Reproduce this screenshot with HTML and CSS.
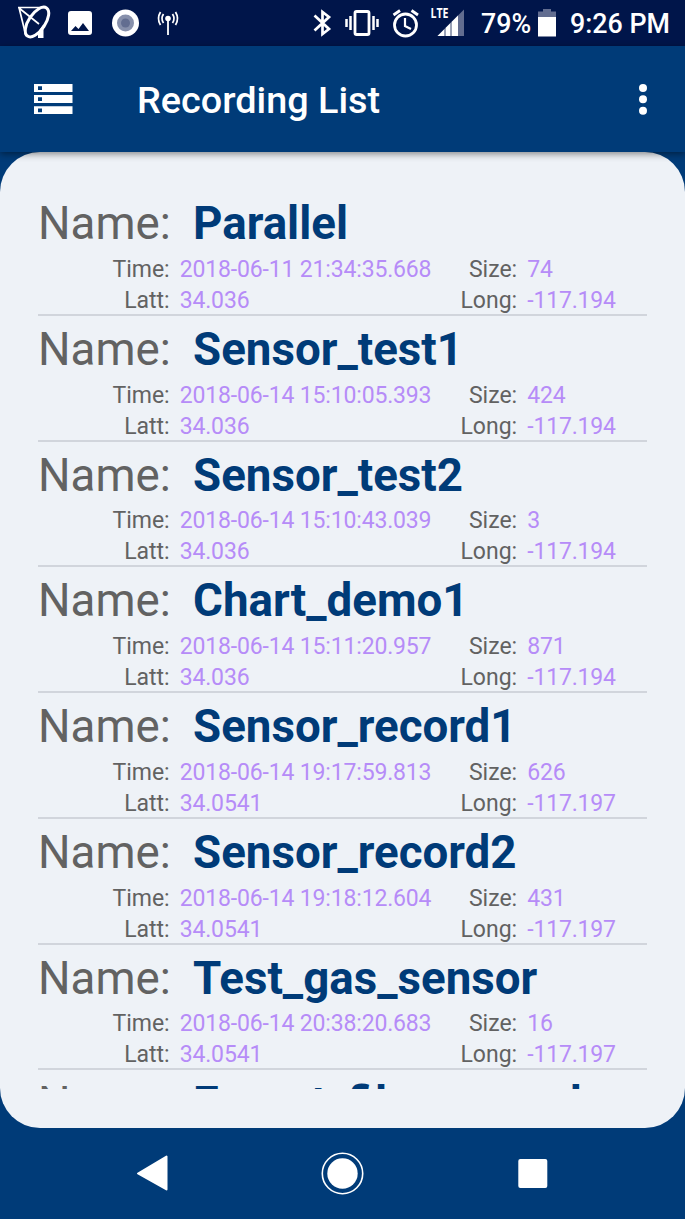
FILE: index.html
```
<!DOCTYPE html>
<html lang="en">
<head>
<meta charset="utf-8">
<title>Recording List</title>
<link rel="stylesheet" href="styles.css">
</head>
<body>
<div class="statusbar">
  <svg class="status-left" width="190" height="46" viewBox="0 0 190 46" fill="none" stroke="#fff">
    <path d="M18 7.500H46M19 7.500L26 36M19 8L39 24" stroke-width="1.700"/>
    <ellipse cx="37" cy="22" rx="8.300" ry="17" transform="rotate(34 37 22)" stroke-width="3"/>
    <path d="M38 32L43.500 24V38H38V36Z" fill="#fff" stroke="none"/>
    <path d="M71 11H89A3 3 0 0 1 92 14V32A3 3 0 0 1 89 35H71A3 3 0 0 1 68 32V14A3 3 0 0 1 71 11ZM71 31H89L83 23L78.500 29L75.500 26Z" fill="#fff" stroke="none" fill-rule="evenodd"/>
    <circle cx="125.500" cy="23" r="13.500" fill="#fff" stroke="none"/>
    <circle cx="125.500" cy="23" r="8.500" fill="#8790ab" stroke="none"/>
    <circle cx="125.500" cy="23" r="4.500" fill="#626d90" stroke="none"/>
    <path d="M168 19V35" stroke-width="1.800"/>
    <circle cx="168" cy="18.500" r="2.800" fill="#fff" stroke="none"/>
    <path d="M163.500 14Q160.500 18.500 163.500 23M172.500 14Q175.500 18.500 172.500 23M160.500 12Q156.500 18.500 160.500 25M175.500 12Q179.500 18.500 175.500 25" stroke-width="1.800"/>
  </svg>
  <svg class="status-right" width="170" height="46" viewBox="300 0 170 46" fill="none" stroke="#fff">
    <path d="M314.500 15.500L329 29L322.500 34V12L329 17L314.500 30.500" stroke-width="2.700"/>
    <rect x="355" y="11.500" width="14" height="23" rx="1.500" stroke-width="2.800"/>
    <path d="M346.500 19V27M350.500 16V30M373.500 16V30M377.500 19V27" stroke-width="2.500"/>
    <circle cx="405.500" cy="25" r="11" stroke-width="2.800"/>
    <path d="M405 18V26L411 29" stroke-width="2.200"/>
    <path d="M393.500 15L400 10.500M411.500 10.500L418 15" stroke-width="2.800"/>
    <path d="M464 9.500V36H437.500Z" fill="#626d90" stroke="none"/>
    <path d="M458 15.500V36H437.500Z" fill="#fff" stroke="none"/>
    <path d="M445 28V36M451 22V36" stroke="#00154a" stroke-width=".8"/>
    <text class="lte" x="430.500" y="18" textLength="18" lengthAdjust="spacingAndGlyphs">LTE</text>
  </svg>
  <span class="percent">79%</span>
  <svg class="battery" width="18" height="46" viewBox="0 0 18 46"><path d="M0 11.500H5V9H13V11.500H18V17H0Z" fill="#626d90"/><path d="M0 17H18V36.500H0Z" fill="#fff"/></svg>
  <span class="clock">9:26 PM</span>
</div>
<header class="appbar">
  <svg class="storage" width="39" height="30" viewBox="0 0 39 30"><path fill="#fff" fill-rule="evenodd" d="M0 0H38.500V8H0ZM0 11H38.500V19H0ZM0 22.300H38.500V30H0ZM4 2.200V6H8V2.200ZM4 13.200V17H8V13.200ZM4 24.500V28.300H8V24.500Z"/></svg>
  <h1 class="title">Recording List</h1>
  <svg class="more" width="10" height="32" viewBox="0 0 10 32" fill="#fff"><circle cx="5" cy="5" r="4"/><circle cx="5" cy="16.300" r="4"/><circle cx="5" cy="27.700" r="4"/></svg>
</header>
<main class="panel">
  <div class="list" id="list"></div>
</main>
<nav class="navbar">
  <svg width="685" height="91" viewBox="0 0 685 91" fill="#fff"><path d="M138 45.500L166.500 28.500V61.500Z" stroke="#fff" stroke-width="2" stroke-linejoin="round"/><circle cx="342.500" cy="45.500" r="15.200"/><circle cx="342.500" cy="45.500" r="20.200" fill="none" stroke="#fff" stroke-width="1.600"/><rect x="518.300" y="31" width="29" height="29" rx="2"/></svg>
</nav>
<script src="list.js"></script>
</body>
</html>
```
FILE: styles.css
```
body { margin: 0; width: 685px; height: 1219px; overflow: hidden; background: #003b78; color: #fff; font-family: Roboto, sans-serif; display: flex; flex-direction: column; }
svg { display: block; flex: none; }
.statusbar { height: 46px; flex: none; background: #00154a; display: flex; align-items: center; font-size: 26.800px; font-weight: 500; white-space: nowrap; }
.status-right { margin-left: 110px; }
.lte { font: 700 14px "Open Sans", sans-serif; fill: #fff; stroke: none; }
.percent { width: 57px; margin: 2px 0 0 11px; }
.clock { margin: 2px 0 0 14px; }
.appbar { height: 106px; flex: none; box-sizing: border-box; padding: 0 37px 0 34px; display: flex; align-items: center; background: #003b78; box-shadow: 0 2px 7px rgba(0, 0, 0, .45); z-index: 1; }
.title { margin: 1px 0 0 64px; font-size: 37.800px; font-weight: 500; flex: 1; line-height: 44px; }
.panel { height: 976px; flex: none; box-sizing: border-box; padding: 38px; border-radius: 40px; background: #eef2f7; }
.list { height: 899px; overflow: hidden; }
.record { height: 125.750px; box-sizing: border-box; border-bottom: 2px solid #d1d5dc; color: #626262; white-space: nowrap; }
.heading { height: 63.900px; display: grid; grid-template-columns: 132px 1fr; column-gap: 23px; align-items: start; font-size: 45.700px; line-height: 68px; }
.heading strong { color: #003b78; font-weight: 700; }
.fields { display: grid; grid-template-columns: 131.700px 259.500px 68px 1fr; column-gap: 10px; grid-auto-rows: 31px; font-size: 23px; line-height: 31px; }
.label { text-align: right; }
.value { color: #b68cf8; letter-spacing: -.16px; }
```
FILE: list.js
```
const records = [
  ["Parallel", "2018-06-11 21:34:35.668", "74", "34.036", "-117.194"],
  ["Sensor_test1", "2018-06-14 15:10:05.393", "424", "34.036", "-117.194"],
  ["Sensor_test2", "2018-06-14 15:10:43.039", "3", "34.036", "-117.194"],
  ["Chart_demo1", "2018-06-14 15:11:20.957", "871", "34.036", "-117.194"],
  ["Sensor_record1", "2018-06-14 19:17:59.813", "626", "34.0541", "-117.197"],
  ["Sensor_record2", "2018-06-14 19:18:12.604", "431", "34.0541", "-117.197"],
  ["Test_gas_sensor", "2018-06-14 20:38:20.683", "16", "34.0541", "-117.197"],
  ["Export_file_example", "", "", "", ""]
];
const field = (label, value) =>
  `<span class="label">${label}</span><span class="value">${value}</span>`;
document.getElementById("list").innerHTML = records.map(([name, time, size, lat, lon]) => `
  <article class="record">
    <div class="heading"><span>Name:</span><strong>${name}</strong></div>
    ${time ? `<div class="fields">${field("Time:", time)}${field("Size:", size)}${field("Latt:", lat)}${field("Long:", lon)}</div>` : ""}
  </article>`).join("");
```
